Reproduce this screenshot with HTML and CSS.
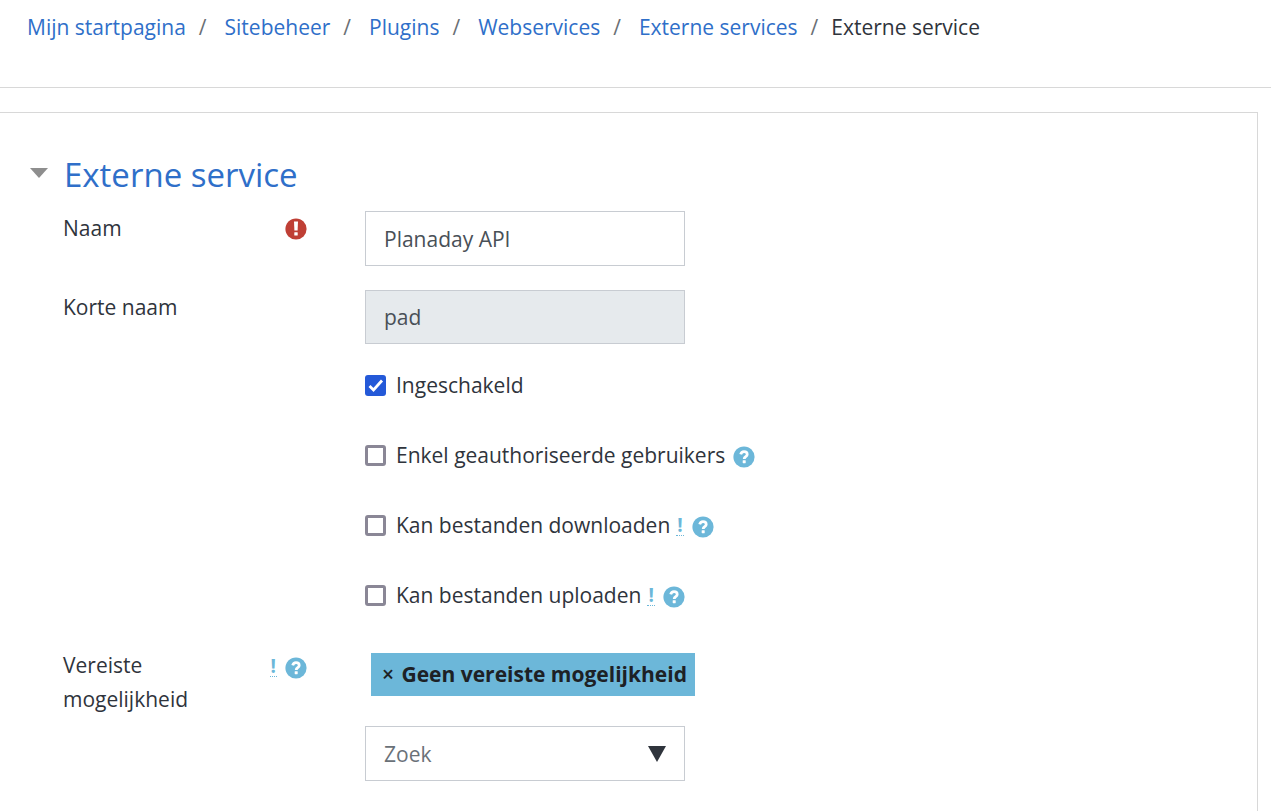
FILE: index.html
```html
<!DOCTYPE html>
<html lang="nl">
<head>
  <meta charset="UTF-8">
  <meta name="viewport" content="width=device-width, initial-scale=1">
  <title>Externe service</title>
  <link rel="stylesheet" href="styles.css">
</head>
<body>
  <svg class="sprite" aria-hidden="true">
    <symbol id="icon-help" viewBox="0 0 22 22">
      <circle cx="11" cy="11" r="10.6" fill="#6cb7d9"/>
      <path d="M7.7 8.4C8.1 6.7 9.3 5.7 11 5.7c2 0 3.2 1.1 3.2 2.7 0 2.4-3 2.2-3 4.6" fill="none" stroke="#fff" stroke-width="2.8"/>
      <rect x="9.7" y="14.2" width="3" height="3" rx="0.4" fill="#fff"/>
    </symbol>
    <symbol id="icon-required" viewBox="0 0 22 22">
      <circle cx="11" cy="11" r="10.6" fill="#bf3f35"/>
      <path d="M9 3.6h4l-.4 9H9.4z" fill="#fff"/>
      <rect x="9.3" y="14.2" width="3.4" height="3.4" rx="0.4" fill="#fff"/>
    </symbol>
  </svg>

  <header class="page-header">
    <nav aria-label="Kruimelpad">
      <ol class="breadcrumb">
        <li><a href="#">Mijn startpagina</a></li>
        <li><a href="#">Sitebeheer</a></li>
        <li><a href="#">Plugins</a></li>
        <li><a href="#">Webservices</a></li>
        <li><a href="#">Externe services</a></li>
        <li class="current">Externe service</li>
      </ol>
    </nav>
  </header>

  <main class="card">
    <form>
      <div class="section-title">
        <svg class="caret" viewBox="0 0 18 10" aria-hidden="true"><path d="M0 0h18l-9 10z" fill="#8e8e8e"/></svg>
        <h1><a href="#">Externe service</a></h1>
      </div>

      <div class="row">
        <div class="label-col">
          <label for="name">Naam</label>
          <span class="marks"><svg class="icon" role="img" aria-label="Vereist"><use href="#icon-required"/></svg></span>
        </div>
        <input class="field" type="text" id="name" value="Planaday API">
      </div>

      <div class="row">
        <div class="label-col">
          <label for="shortname">Korte naam</label>
        </div>
        <input class="field" type="text" id="shortname" value="pad" disabled>
      </div>

      <div class="row">
        <div class="check">
          <input type="checkbox" id="enabled" checked>
          <label for="enabled">Ingeschakeld</label>
        </div>
      </div>

      <div class="row">
        <div class="check">
          <input type="checkbox" id="restricted">
          <label for="restricted">Enkel geauthoriseerde gebruikers</label>
          <button type="button" class="help" aria-label="Help"><svg class="icon"><use href="#icon-help"/></svg></button>
        </div>
      </div>

      <div class="row">
        <div class="check">
          <input type="checkbox" id="download">
          <label for="download">Kan bestanden downloaden</label>
          <abbr class="advanced">!</abbr>
          <button type="button" class="help" aria-label="Help"><svg class="icon"><use href="#icon-help"/></svg></button>
        </div>
      </div>

      <div class="row">
        <div class="check">
          <input type="checkbox" id="upload">
          <label for="upload">Kan bestanden uploaden</label>
          <abbr class="advanced">!</abbr>
          <button type="button" class="help" aria-label="Help"><svg class="icon"><use href="#icon-help"/></svg></button>
        </div>
      </div>

      <div class="row">
        <div class="label-col">
          <label for="capability">Vereiste mogelijkheid</label>
          <span class="marks">
            <abbr class="advanced">!</abbr>
            <button type="button" class="help" aria-label="Help"><svg class="icon"><use href="#icon-help"/></svg></button>
          </span>
        </div>
        <div class="autocomplete">
          <button type="button" class="tag"><span class="remove">×</span> Geen vereiste mogelijkheid</button>
          <div class="field search">
            <input type="text" id="capability" placeholder="Zoek">
            <button type="button" class="open" aria-label="Toon suggesties">
              <svg viewBox="0 0 18 16" aria-hidden="true"><path d="M0 0h18L9 16z" fill="#2f343c"/></svg>
            </button>
          </div>
        </div>
      </div>
    </form>
  </main>
</body>
</html>
```
FILE: styles.css
```css
* { margin: 0; padding: 0; box-sizing: border-box; }
body {
  font-family: "Segoe UI", "Open Sans", "Noto Sans", sans-serif;
  font-size: 21px;
  line-height: 34px;
  color: #2f343c;
  background: #fff;
}
a {
  color: #2f6fc9;
  text-decoration: none;
}
button, input {
  font: inherit;
  color: inherit;
}
button {
  background: none;
  border: none;
  cursor: pointer;
}
.sprite {
  display: none;
}
.page-header {
  padding: 10px 27px 43px;
  border-bottom: 1px solid #d8d8d8;
}
.breadcrumb {
  display: flex;
  flex-wrap: wrap;
  list-style: none;
}
.breadcrumb li + li::before {
  content: "/";
  padding: 0 18px 0 13px;
  color: #6a6f75;
}
.breadcrumb li.current::before {
  padding-right: 13px;
}
.card {
  margin: 24px 13px 0 0;
  padding: 38px 30px 30px;
  border: 1px solid #d8d8d8;
  border-left: none;
}
.section-title {
  display: flex;
  align-items: center;
  gap: 16px;
  margin-bottom: 12px;
}
.caret {
  width: 18px;
  height: 10px;
  margin-bottom: 5px;
}
h1 {
  font-size: 33px;
  font-weight: 400;
  line-height: 48px;
}
.row {
  display: grid;
  grid-template-columns: 244px 1fr;
  column-gap: 58px;
  margin: 0 0 24px 33px;
}
.label-col {
  display: flex;
  justify-content: space-between;
  align-items: flex-start;
}
.marks {
  display: flex;
  align-items: center;
  gap: 8px;
  height: 36px;
}
.icon {
  display: block;
  width: 22px;
  height: 22px;
}
.help {
  display: block;
  margin-top: 4px;
}
.advanced {
  padding: 0 1px;
  border-bottom: 1px dotted #6cb7d9;
  color: #6cb7d9;
  font-size: 19px;
  font-weight: 700;
  line-height: 20px;
}
.field {
  width: 320px;
  max-width: 100%;
  height: 55px;
  padding: 0 18px;
  border: 1px solid #c8ccd2;
  background: #fff;
  color: #495057;
}
.field:disabled {
  height: 54px;
  background: #e6eaed;
}
.check {
  grid-column: 2;
  display: flex;
  align-items: center;
  min-height: 46px;
  padding-bottom: 12px;
}
.check label {
  margin: 0 8px 0 10px;
}
.check .advanced {
  margin: 0 8px 0 -2px;
}
.check input {
  appearance: none;
  width: 21px;
  height: 21px;
  border: 3px solid #8a8796;
  border-radius: 3px;
  background: #fff;
}
.check input:checked {
  border: none;
  background: #2459d8 url("data:image/svg+xml,%3Csvg xmlns='http://www.w3.org/2000/svg' viewBox='0 0 21 21'%3E%3Cpath d='M4.5 11l4 4L17 5.5' fill='none' stroke='white' stroke-width='2.8'/%3E%3C/svg%3E");
}
.autocomplete {
  padding-top: 5px;
}
.tag {
  display: block;
  margin: 0 0 30px 6px;
  padding: 4px 8px 5px 11px;
  background: #6cb7d9;
  color: #1d2125;
  font-weight: 700;
}
.remove {
  margin-right: 2px;
  font-weight: 600;
}
.search {
  display: flex;
  align-items: center;
}
.search input {
  flex: 1;
  min-width: 0;
  border: none;
  outline: none;
  background: none;
}
.search input::placeholder {
  color: #6a7178;
  opacity: 1;
}
.open svg {
  display: block;
  width: 18px;
  height: 16px;
}
```
